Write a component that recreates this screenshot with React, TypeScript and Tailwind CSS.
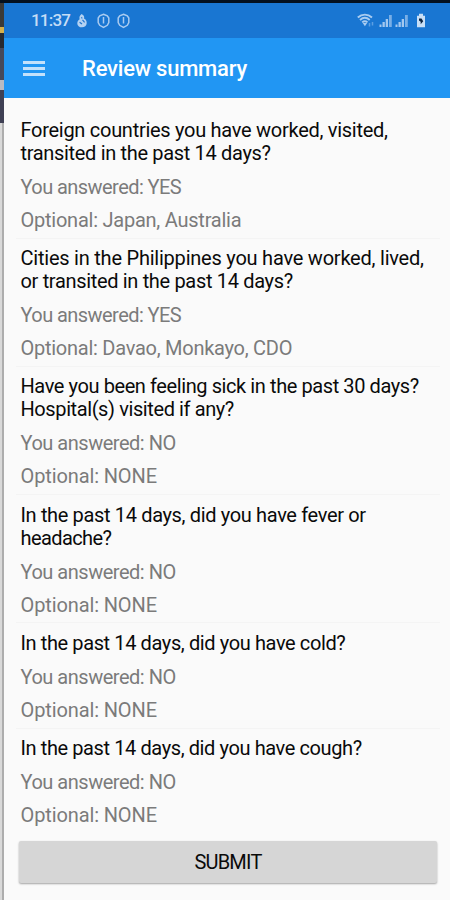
import React from 'react';

interface Line {
  text: string;
  tracking: string;
}

interface Question {
  title: Line[];
  answer: Line;
  optional: Line;
}

const YES: Line = { text: 'You answered: YES', tracking: 'tracking-[-0.560px]' };
const NO: Line = { text: 'You answered: NO', tracking: 'tracking-[-0.480px]' };
const NONE: Line = { text: 'Optional: NONE', tracking: 'tracking-[-0.120px]' };

const questions: Question[] = [
  {
    title: [
      { text: 'Foreign countries you have worked, visited,', tracking: 'tracking-[-0.280px]' },
      { text: 'transited in the past 14 days?', tracking: 'tracking-[-0.330px]' },
    ],
    answer: YES,
    optional: { text: 'Optional: Japan, Australia', tracking: 'tracking-[-0.240px]' },
  },
  {
    title: [
      { text: 'Cities in the Philippines you have worked, lived,', tracking: 'tracking-[-0.225px]' },
      { text: 'or transited in the past 14 days?', tracking: 'tracking-[-0.330px]' },
    ],
    answer: YES,
    optional: { text: 'Optional: Davao, Monkayo, CDO', tracking: 'tracking-[-0.260px]' },
  },
  {
    title: [
      { text: 'Have you been feeling sick in the past 30 days?', tracking: 'tracking-[-0.410px]' },
      { text: 'Hospital(s) visited if any?', tracking: 'tracking-[-0.400px]' },
    ],
    answer: NO,
    optional: NONE,
  },
  {
    title: [
      { text: 'In the past 14 days, did you have fever or', tracking: 'tracking-[-0.350px]' },
      { text: 'headache?', tracking: 'tracking-[-0.600px]' },
    ],
    answer: NO,
    optional: NONE,
  },
  {
    title: [{ text: 'In the past 14 days, did you have cold?', tracking: 'tracking-[-0.390px]' }],
    answer: NO,
    optional: NONE,
  },
  {
    title: [{ text: 'In the past 14 days, did you have cough?', tracking: 'tracking-[-0.400px]' }],
    answer: NO,
    optional: NONE,
  },
];

const ShieldIcon = () => (
  <svg width="13" height="16" viewBox="0 0 13 16" fill="none" stroke="#a9cbf0" strokeWidth="1.500">
    <path d="M6.500 1.200 10.300 2.800 11.800 5v4.500L10.300 12.300 6.500 14.300 2.700 12.300 1.200 9.500V5L2.700 2.800z" />
    <path d="M6.500 4v6.500" />
  </svg>
);

const FlameIcon = () => (
  <svg width="12" height="16" viewBox="0 0 12 16">
    <path d="M5.500 1C8 2 8.600 4 8 5.600c2 1 2.900 2.600 2.700 4.700C10.500 12.800 8.700 14.300 6 14.300S1.300 12.800 1.300 10.400C1.300 8.600 2.200 7.200 3.700 6.300 2.900 4.500 3.700 2.400 5.500 1z" fill="#b4d2f2" />
    <path d="M3.600 9.200 6 11M6.500 6.800 8.600 9.300M5.300 4.300l1 1" stroke="#1b73cf" strokeWidth="1.100" />
  </svg>
);

const SignalIcon = () => (
  <svg width="14" height="14" viewBox="0 0 14 14" fill="#a3c8ef">
    <rect x="0.500" y="10.500" width="2" height="2.500" />
    <rect x="3.500" y="8" width="2.300" height="5" />
    <rect x="6.700" y="5" width="2.300" height="8" />
    <rect x="10" y="1" width="2.800" height="12" opacity="0.700" />
  </svg>
);

const WifiIcon = () => (
  <svg width="19" height="15" viewBox="0 0 19 15" fill="none" stroke="#a9ccf0" strokeWidth="1.900">
    <path d="M0.800 4.500C5 0.600 10.800 0.600 15 4.500" />
    <path d="M3 7C6 4.300 9.700 4.300 12.700 7" />
    <path d="M5.200 9.400c1.600-1.400 3.700-1.400 5.300 0" />
    <path d="M5.700 10h4.400L7.900 13.200z" fill="#a9ccf0" stroke="none" />
    <path d="M12.500 10v3.500M15.500 9v3.500" stroke="#5c9ee2" strokeWidth="1.500" />
  </svg>
);

const BatteryIcon = () => (
  <svg width="10" height="15" viewBox="0 0 10 15">
    <path d="M3 0.800h4v2h2v11.400H1V2.800h2z" fill="#c8dff6" />
    <path d="M3 5.500h2.500l1.700 2.700-2.500 3V8.700L3 7.500z" fill="#0c2440" />
  </svg>
);

const StatusBar = () => (
  <div className="flex h-[35px] items-center justify-between bg-[#1976d2] pl-[27px] pr-[24px]">
    <div className="flex items-center">
      <span className="w-[45px] whitespace-nowrap text-[17px] font-medium leading-none tracking-[-0.800px] text-[#c5ddf6]">11:37</span>
      <FlameIcon />
      <span className="ml-[9px]"><ShieldIcon /></span>
      <span className="ml-[7px]"><ShieldIcon /></span>
    </div>
    <div className="flex items-center">
      <WifiIcon />
      <span className="ml-[3px]"><SignalIcon /></span>
      <span className="ml-[2px]"><SignalIcon /></span>
      <span className="ml-[7px]"><BatteryIcon /></span>
    </div>
  </div>
);

const AppBar = () => (
  <div className="flex h-[60px] items-center bg-[#2196f3] pl-[19px]">
    <button aria-label="Menu" className="flex w-[22px] flex-col gap-[3px]">
      <span className="h-[3px] w-full bg-[#c3e1fb]" />
      <span className="h-[3px] w-full bg-[#c3e1fb]" />
      <span className="h-[3px] w-full bg-[#c3e1fb]" />
    </button>
    <h1 className="mt-[2px] ml-[37px] whitespace-nowrap text-[22px] font-medium leading-none tracking-[-0.220px] text-white">Review summary</h1>
  </div>
);

const QuestionItem: React.FC<{ question: Question }> = ({ question }) => (
  <li className="mr-[10px] ml-[12px] border-b border-[#f4f4f4] pt-[8.500px] pb-[0.800px] pl-[4.500px] text-[20px] last:border-transparent">
    <h2 className="mb-[6px] text-[#0a0a0a]">
      {question.title.map((line) => (
        <span key={line.text} className={`block w-fit whitespace-nowrap leading-[23px] ${line.tracking}`}>
          {line.text}
        </span>
      ))}
    </h2>
    {[question.answer, question.optional].map((line) => (
      <p key={line.text} className={`w-fit whitespace-nowrap leading-[33px] text-[#7b7b7b] ${line.tracking}`}>
        {line.text}
      </p>
    ))}
  </li>
);

// Sliver of the desktop window visible behind the phone mirror
const WindowEdge = () => (
  <div className="flex h-full w-[4px] flex-col">
    <div className="h-[24px] bg-[#3b3a38]" />
    <div className="h-[6px] bg-[#d6b04c]" />
    <div className="h-[15px] bg-[#282a30]" />
    <div className="h-[32px] bg-[#46495a]" />
    <div className="h-[10px] bg-[#b9bac2]" />
    <div className="h-[33px] bg-[#3f4054]" />
    <div className="flex flex-1">
      <div className="w-[2px] bg-[#d9d9d9]" />
      <div className="w-[2px] bg-[#adadad]" />
    </div>
  </div>
);

const App: React.FC = () => {
  return (
    <div className="flex h-[900px] w-[450px] flex-col overflow-hidden bg-[#fafafa] font-['Roboto','Liberation_Sans',sans-serif]">
      <div className="h-[3px] shrink-0 bg-[#03101f]" />
      <div className="flex min-h-0 flex-1">
        <WindowEdge />
        <div className="flex min-w-0 flex-1 flex-col">
          <StatusBar />
          <AppBar />
          <ul className="mt-[12.300px]">
            {questions.map((question) => (
              <QuestionItem key={question.title[0].text} question={question} />
            ))}
          </ul>
          <button className="mt-[7px] mr-[13px] ml-[15px] h-[42px] rounded-[2px] bg-[#d6d6d6] text-[20px] leading-none tracking-[-0.800px] text-[#0a0a0a] shadow-[0_1px_2px_rgba(0,0,0,0.350)]">
            SUBMIT
          </button>
        </div>
      </div>
    </div>
  );
};

export default App;
